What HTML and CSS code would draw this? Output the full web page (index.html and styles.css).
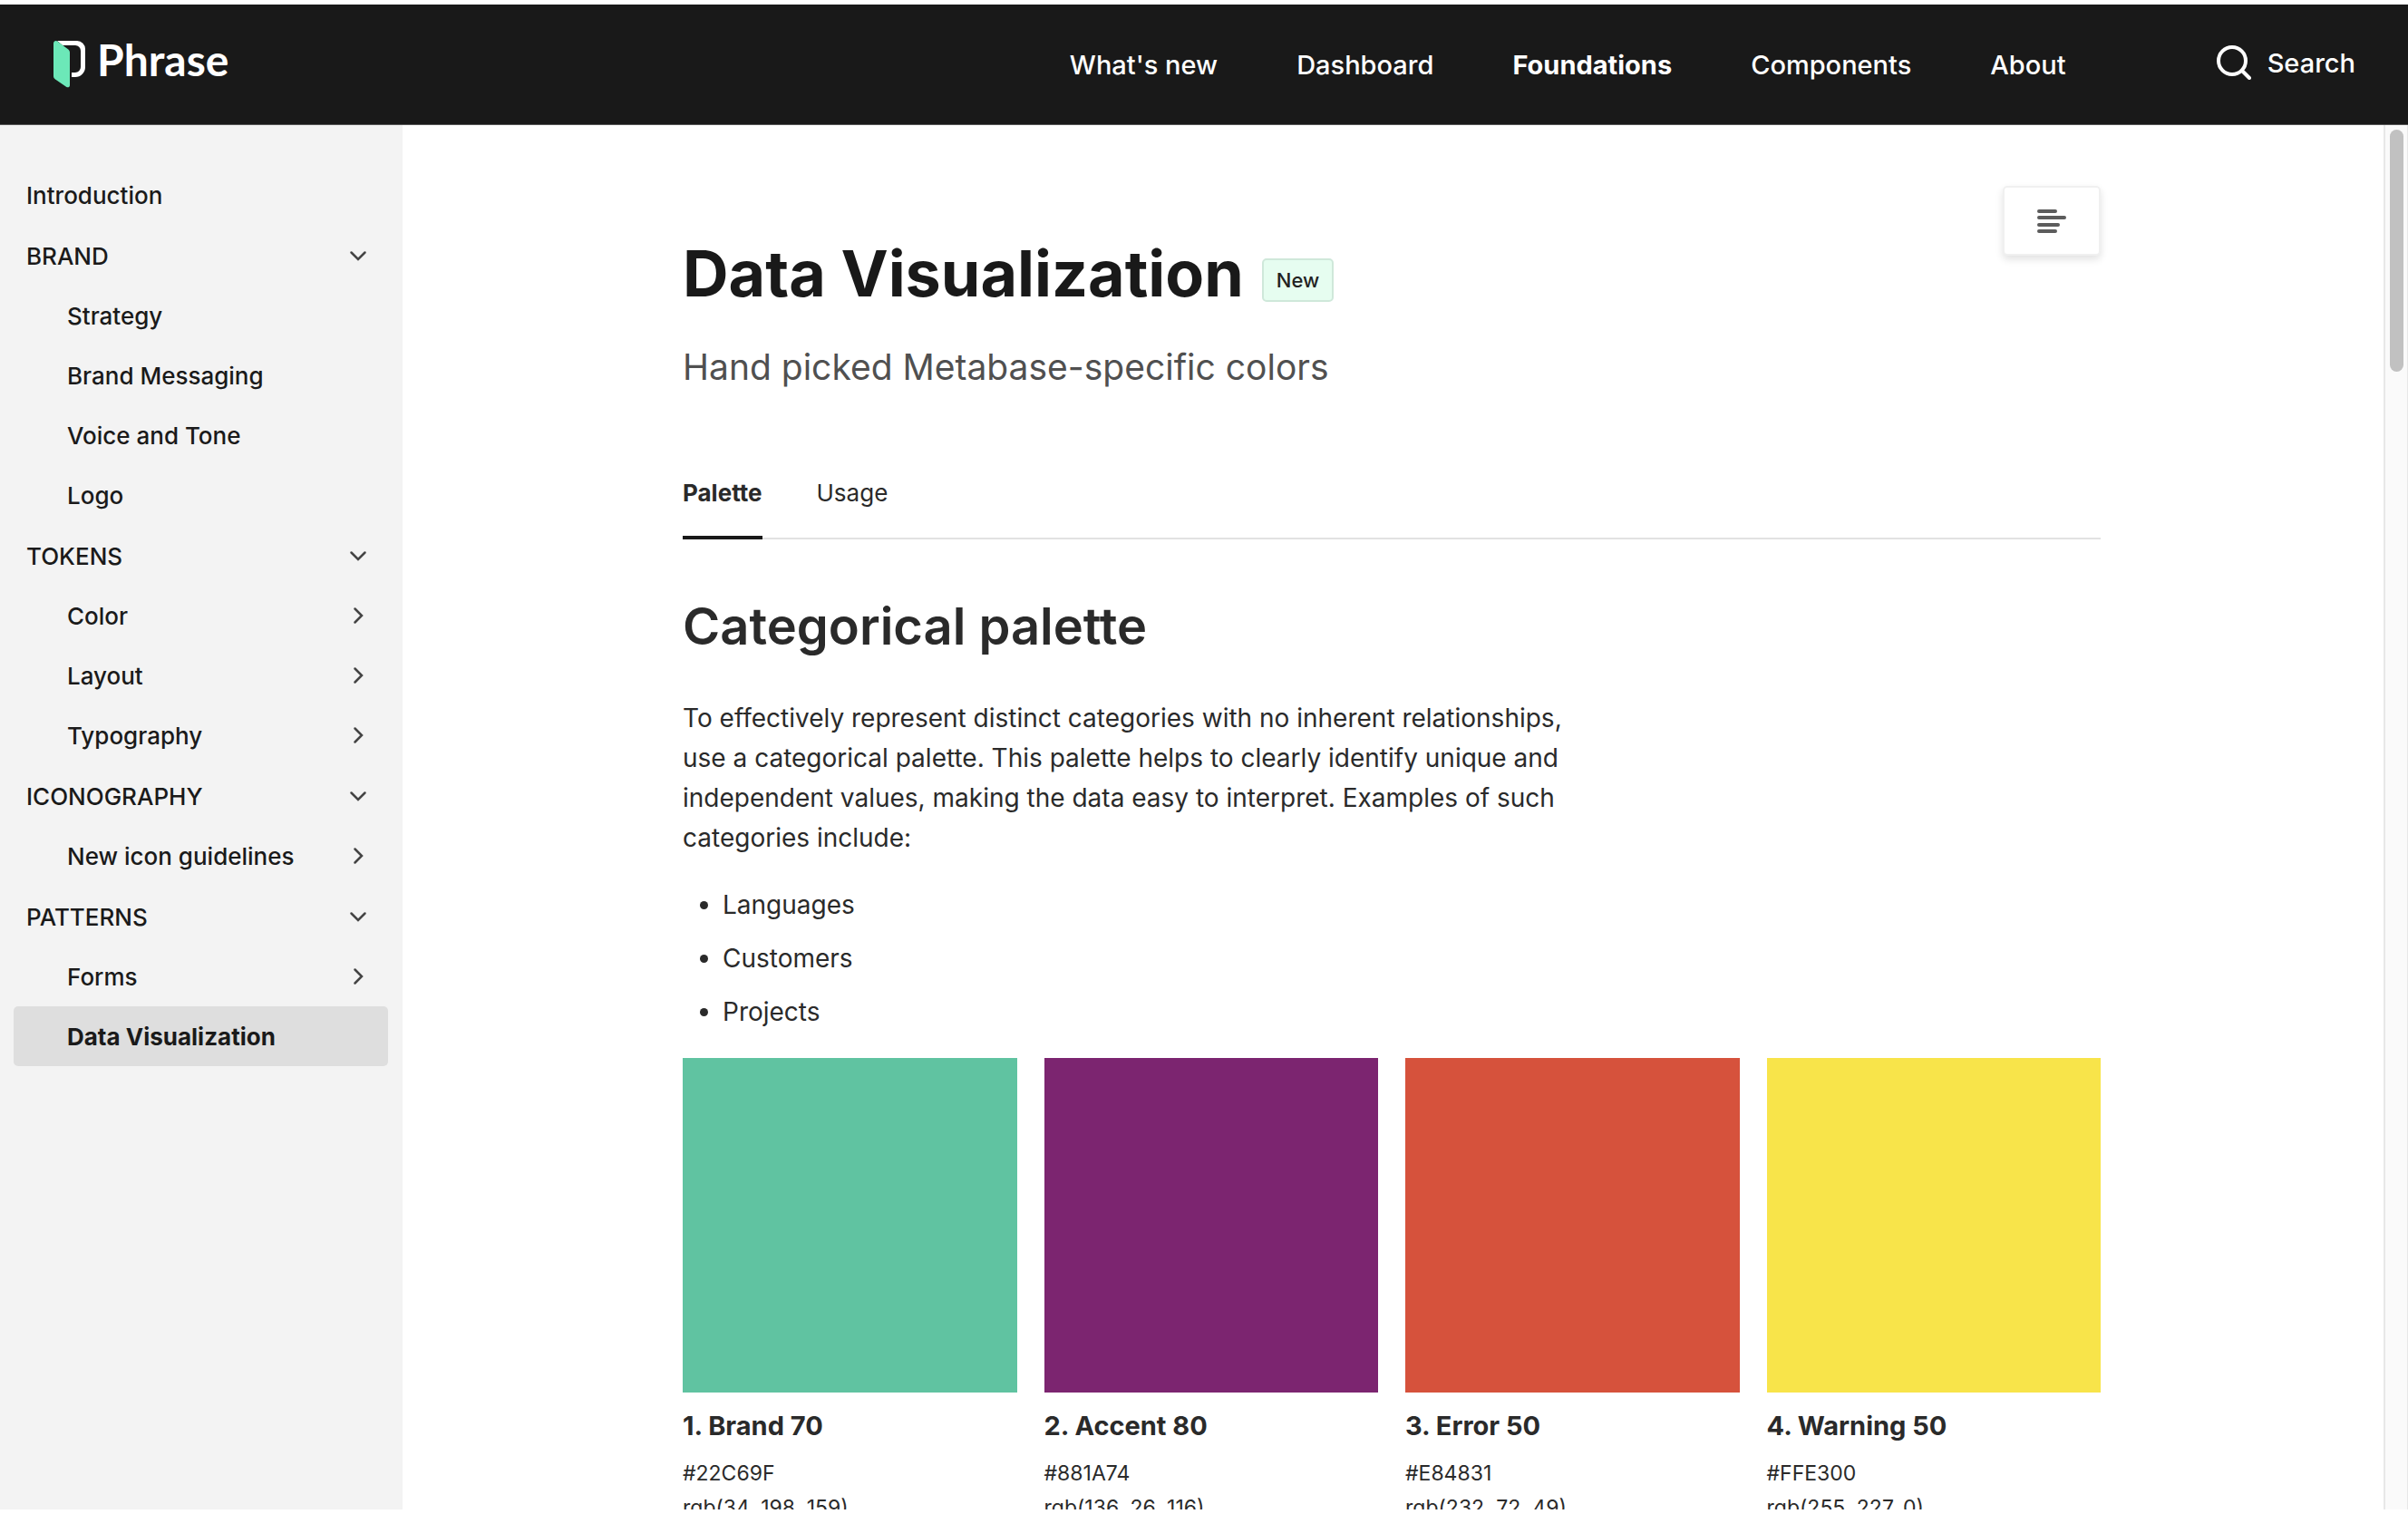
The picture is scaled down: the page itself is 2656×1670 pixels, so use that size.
FILE: index.html
```
<!DOCTYPE html>
<html lang="en">
<head>
<meta charset="utf-8">
<title>Data Visualization – Phrase</title>
<link rel="stylesheet" href="styles.css">
</head>
<body>
<svg class="sprite" aria-hidden="true">
  <symbol id="down" viewBox="0 0 24 24"><path d="M4.500 8.500 12 16l7.500-7.500"/></symbol>
  <symbol id="right" viewBox="0 0 24 24"><path d="M8.500 4.500 16 12l-7.500 7.500"/></symbol>
</svg>

<header class="topbar">
  <a class="logo" href="#">
    <svg class="logo-mark" viewBox="0 0 36 52" aria-hidden="true">
      <path fill="#fff" d="M4 0h22a9 9 0 0 1 9 9v20a11 11 0 0 1-11 11h-4v-5h4a6 6 0 0 0 6-6V11a6 6 0 0 0-6-6H10z"/>
      <path fill="#6ce8b8" d="M0 3c0-2.500 2.500-3.700 4.500-2.300l11.500 8.600c1.300 1 2 2.200 2 3.700v36c0 2-2 3-4 1.800L2 42.600C.7 41.600 0 40.500 0 39z"/>
    </svg>
    <span class="logo-name">Phrase</span>
  </a>
  <nav class="topnav" aria-label="Main">
    <a href="#">What's new</a>
    <a href="#">Dashboard</a>
    <a href="#" class="current">Foundations</a>
    <a href="#">Components</a>
    <a href="#">About</a>
  </nav>
  <button class="search" type="button">
    <svg class="search-icon" viewBox="0 0 38 38" aria-hidden="true"><circle cx="17" cy="17" r="15"/><path d="m28 28 8 8"/></svg>
    Search
  </button>
</header>

<div class="layout">
  <nav class="sidebar" aria-label="Foundations">
    <ul class="group">
      <li><a class="row" href="#">Introduction</a></li>
    </ul>
    <ul class="group">
      <li><button class="row" type="button">BRAND<svg class="chev" aria-hidden="true"><use href="#down"/></svg></button></li>
      <li><a class="row sub" href="#">Strategy</a></li>
      <li><a class="row sub" href="#">Brand Messaging</a></li>
      <li><a class="row sub" href="#">Voice and Tone</a></li>
      <li><a class="row sub" href="#">Logo</a></li>
    </ul>
    <ul class="group">
      <li><button class="row" type="button">TOKENS<svg class="chev" aria-hidden="true"><use href="#down"/></svg></button></li>
      <li><a class="row sub" href="#">Color<svg class="chev" aria-hidden="true"><use href="#right"/></svg></a></li>
      <li><a class="row sub" href="#">Layout<svg class="chev" aria-hidden="true"><use href="#right"/></svg></a></li>
      <li><a class="row sub" href="#">Typography<svg class="chev" aria-hidden="true"><use href="#right"/></svg></a></li>
    </ul>
    <ul class="group">
      <li><button class="row" type="button">ICONOGRAPHY<svg class="chev" aria-hidden="true"><use href="#down"/></svg></button></li>
      <li><a class="row sub" href="#">New icon guidelines<svg class="chev" aria-hidden="true"><use href="#right"/></svg></a></li>
    </ul>
    <ul class="group">
      <li><button class="row" type="button">PATTERNS<svg class="chev" aria-hidden="true"><use href="#down"/></svg></button></li>
      <li><a class="row sub" href="#">Forms<svg class="chev" aria-hidden="true"><use href="#right"/></svg></a></li>
      <li><a class="row sub active" href="#" aria-current="page">Data Visualization</a></li>
    </ul>
  </nav>

  <main class="page">
    <div class="content">
      <div class="page-head">
        <div class="intro">
          <div class="title-row">
            <h1>Data Visualization</h1>
            <span class="badge">New</span>
          </div>
          <p class="subtitle">Hand picked Metabase-specific colors</p>
        </div>
        <button class="toc" type="button" aria-label="On this page">
          <svg viewBox="0 0 34 28" aria-hidden="true"><path d="M3 3h18M3 10h28M3 18h21M3 25h18"/></svg>
        </button>
      </div>

      <div class="tabs">
        <a class="tab selected" href="#">Palette</a>
        <a class="tab" href="#">Usage</a>
      </div>

      <h2>Categorical palette</h2>
      <p class="text">To effectively represent distinct categories with no inherent relationships, use a categorical palette. This palette helps to clearly identify unique and independent values, making the data easy to interpret. Examples of such categories include:</p>
      <ul class="examples">
        <li>Languages</li>
        <li>Customers</li>
        <li>Projects</li>
      </ul>

      <div class="swatches">
        <section>
          <div class="chip brand"></div>
          <h3>1. Brand 70</h3>
          <p>#22C69F</p>
          <p>rgb(34, 198, 159)</p>
        </section>
        <section>
          <div class="chip accent"></div>
          <h3>2. Accent 80</h3>
          <p>#881A74</p>
          <p>rgb(136, 26, 116)</p>
        </section>
        <section>
          <div class="chip error"></div>
          <h3>3. Error 50</h3>
          <p>#E84831</p>
          <p>rgb(232, 72, 49)</p>
        </section>
        <section>
          <div class="chip warning"></div>
          <h3>4. Warning 50</h3>
          <p>#FFE300</p>
          <p>rgb(255, 227, 0)</p>
        </section>
      </div>
    </div>
  </main>

  <div class="scrollbar" aria-hidden="true"><div class="thumb"></div></div>
</div>
</body>
</html>
```
FILE: styles.css
```
* {
  box-sizing: border-box;
}

body {
  display: flex;
  flex-direction: column;
  height: 100vh;
  margin: 0;
  padding: 5px 0;
  overflow: hidden;
  background: #fff;
  color: #2a2a2a;
  font-family: Inter, "Liberation Sans", sans-serif;
}

h1, h2, h3, p, ul {
  margin: 0;
  padding: 0;
}

a {
  color: inherit;
  text-decoration: none;
}

button {
  border: 0;
  background: none;
  color: inherit;
  font: inherit;
}

.sprite {
  display: none;
}

/* Top bar */
.topbar {
  display: flex;
  flex: none;
  align-items: center;
  height: 133px;
  padding: 0 58px 0 59px;
  border-bottom: 1px solid #555;
  background: #191919;
  color: #fff;
  font-size: 29px;
  font-weight: 500;
}

.logo {
  display: flex;
  align-items: flex-start;
  gap: 12px;
}

.logo-mark {
  width: 36px;
  height: 52px;
}

.logo-name {
  font-family: Lato, sans-serif;
  font-size: 48px;
  font-weight: 700;
  line-height: 42px;
}

.topnav {
  display: flex;
  gap: 87px;
  margin-left: auto;
}

.topnav .current {
  font-weight: 700;
}

.search {
  display: flex;
  align-items: center;
  gap: 18px;
  margin-left: 166px;
  padding: 0 0 4px;
}

.search-icon {
  width: 38px;
  height: 38px;
  fill: none;
  stroke: #fff;
  stroke-width: 4;
  stroke-linecap: round;
}

.layout {
  display: flex;
  flex: 1;
  min-height: 0;
  overflow: hidden;
}

/* Sidebar */
.sidebar {
  display: flex;
  flex: none;
  flex-direction: column;
  gap: 1px;
  width: 444px;
  padding: 44px 16px 0 15px;
  background: #f3f3f3;
  color: #1a1a1a;
}

.group {
  list-style: none;
}

.row {
  display: flex;
  align-items: center;
  justify-content: space-between;
  width: 100%;
  height: 66px;
  padding: 0 21px 0 14px;
  border-radius: 5px;
  font-size: 26px;
  font-weight: 500;
}

.row.sub {
  padding-left: 59px;
}

.row.active {
  background: #dedede;
  font-weight: 700;
}

.chev {
  width: 24px;
  height: 24px;
  fill: none;
  stroke: #444;
  stroke-width: 2.5;
  stroke-linecap: round;
}

/* Page */
.page {
  flex: 1;
  min-width: 0;
  padding-right: 3px;
}

.content {
  max-width: 1564px;
  margin: 0 auto;
  padding-top: 67px;
}

.page-head {
  display: flex;
  align-items: flex-start;
  justify-content: space-between;
}

.intro {
  padding-top: 55px;
}

.title-row {
  display: flex;
  align-items: flex-end;
  gap: 20px;
}

h1 {
  color: #191919;
  font-size: 70px;
  font-weight: 700;
  line-height: 84px;
}

.badge {
  margin-bottom: 11px;
  padding: 0 14px;
  border: 2px solid #cfe8da;
  border-radius: 5px;
  background: #e6fdf0;
  color: #222;
  font-size: 22px;
  font-weight: 500;
  line-height: 44px;
}

.subtitle {
  margin-top: 33px;
  color: #505050;
  font-size: 39px;
  font-weight: 400;
  line-height: 56px;
}

.toc {
  display: flex;
  align-items: center;
  justify-content: center;
  width: 108px;
  height: 77px;
  border: 2px solid #f0f0f0;
  border-radius: 5px;
  background: #fff;
  box-shadow: 0 4px 8px rgba(0, 0, 0, 0.12);
}

.toc svg {
  width: 34px;
  height: 28px;
  fill: none;
  stroke: #5c5c5c;
  stroke-width: 4;
  stroke-linecap: round;
}

.tabs {
  display: flex;
  gap: 60px;
  margin-top: 91px;
  border-bottom: 2px solid #e2e2e2;
}

.tab {
  margin-bottom: -2px;
  padding-bottom: 27px;
  border-bottom: 4px solid transparent;
  font-size: 26px;
  line-height: 40px;
}

.tab.selected {
  border-color: #191919;
  font-weight: 700;
}

h2 {
  margin-top: 60px;
  font-size: 56px;
  font-weight: 600;
  line-height: 72px;
}

.text {
  max-width: 1000px;
  margin-top: 43px;
  font-size: 28px;
  line-height: 44px;
}

.examples {
  display: grid;
  gap: 15px;
  margin: 30px 0 29px;
  padding-left: 44px;
  font-size: 28px;
  line-height: 44px;
}

.swatches {
  display: grid;
  grid-template-columns: repeat(4, 1fr);
  gap: 30px;
}

.chip {
  aspect-ratio: 1;
}

.brand { background: #60c3a1; }
.accent { background: #7c2570; }
.error { background: #d6523c; }
.warning { background: #f8e44a; }

h3 {
  margin: 15px 0 11px;
  font-size: 29px;
  font-weight: 700;
  line-height: 44px;
}

.swatches p {
  font-size: 23px;
  line-height: 38px;
}

/* Scrollbar */
.scrollbar {
  flex: none;
  width: 27px;
  padding: 5px 4px 0 5px;
  border: solid #e8e8e8;
  border-width: 0 1px 0 2px;
  background: #fafafa;
}

.thumb {
  height: 267px;
  border-radius: 8px;
  background: #c1c1c1;
}
```
